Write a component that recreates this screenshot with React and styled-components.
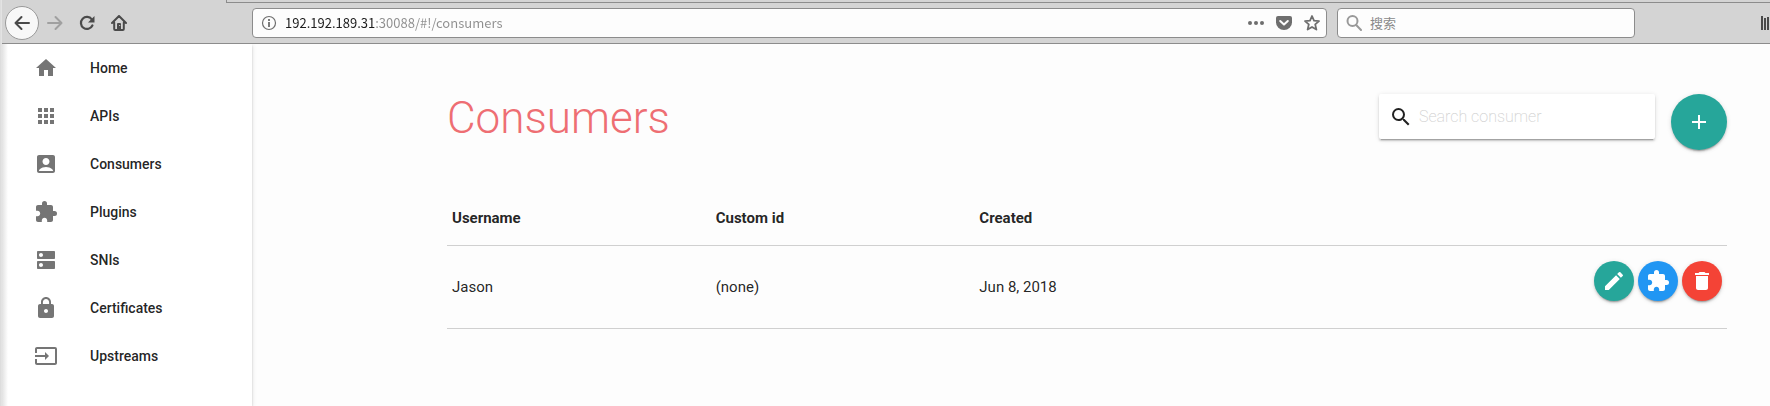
import React from 'react';
import styled, { createGlobalStyle } from 'styled-components';
import {
  MdHome, MdApps, MdAccountBox, MdExtension, MdDns, MdLock, MdInput,
  MdSearch, MdAdd, MdEdit, MdDelete,
} from 'react-icons/md';

const GlobalStyle = createGlobalStyle`
  *, *::before, *::after { box-sizing: border-box; }
  body {
    margin: 0;
    background: #fdfdfd;
    color: rgba(0, 0, 0, 0.87);
    font-family: Roboto, "Noto Sans CJK SC", sans-serif;
    font-size: 15px;
  }
`;

const Window = styled.div`
  display: flex;
  flex-direction: column;
  min-height: 100vh;
  padding-left: 2px;
  background: linear-gradient(to right, #dadada, #e6e6e6 2px, transparent 2px);
`;

const TabStrip = styled.div`
  height: 3px;
  padding-left: 224px;
  background: #d4d4d4;
`;

const TabEdge = styled.div`
  height: 3px;
  border-left: 1px solid #8c8c8c;
  border-bottom: 1px solid #8c8c8c;
`;

const Toolbar = styled.header`
  display: flex;
  align-items: center;
  height: 41px;
  background: #d4d4d4;
  border-bottom: 1px solid #8c8c8c;
`;

const NavButtons = styled.div`
  flex: 0 0 250px;
  display: flex;
  align-items: center;
  padding-left: 3px;
`;

const NavButton = styled.button`
  display: flex;
  align-items: center;
  justify-content: center;
  width: ${(p) => (p.$round ? 34 : 32)}px;
  height: 34px;
  padding: 0;
  border: ${(p) => (p.$round ? '1px solid #999' : '0')};
  border-radius: 50%;
  background: ${(p) => (p.$round ? '#f8f8f8' : 'transparent')};
  color: ${(p) => (p.disabled ? '#a0a0a0' : '#4a4a4a')};
`;

const Field = styled.div`
  flex: ${(p) => p.$grow} 1 0;
  min-width: 0;
  display: flex;
  align-items: center;
  height: 30px;
  padding: 0 6px 0 8px;
  border: 1px solid #8c8c8c;
  border-radius: 4px;
  background: #fdfdfd;
  color: ${(p) => (p.$url ? '#6e6e6e' : '#999')};
  gap: 8px;
  margin-left: ${(p) => (p.$url ? 0 : 10)}px;
`;

const FieldInput = styled.input`
  flex: 1;
  min-width: 0;
  height: 26px;
  padding: 0;
  border: 0;
  outline: 0;
  background: transparent;
  color: #222;
  font: 13px/26px "Noto Sans CJK SC", sans-serif;
  &::placeholder { color: #8a8a8a; opacity: 1; }
`;

/* The host part of the address is dark, the path after it grey. */
const AddressInput = styled(FieldInput)`
  background: linear-gradient(to right, #1c1c1c 90px, #8e8e8e 90px);
  background-clip: text;
  -webkit-background-clip: text;
  color: transparent;
  caret-color: #222;
`;

const FieldButton = styled.button`
  display: flex;
  padding: 0;
  border: 0;
  background: transparent;
  color: inherit;
`;

const FieldActions = styled.div`
  display: flex;
  align-items: center;
  gap: 12px;
`;

const ToolbarSpace = styled.div`
  flex: 126 1 0;
`;

const LibraryButton = styled.button`
  flex: 0 0 9px;
  overflow: hidden;
  display: flex;
  padding: 0;
  border: 0;
  background: transparent;
  color: #4a4a4a;
  svg { flex: none; }
`;

const Body = styled.div`
  flex: 1;
  display: flex;
`;

const Sidebar = styled.nav`
  flex: 0 0 250px;
  background: linear-gradient(to right, #e2e2e2, #fff 6px);
  box-shadow: 0 2px 2px 0 rgba(0, 0, 0, 0.14), 0 1px 5px 0 rgba(0, 0, 0, 0.12);
  clip-path: inset(0 -8px 0 0);
`;

const SideLink = styled.a`
  display: flex;
  align-items: center;
  height: 48px;
  padding-left: 32px;
  gap: 32px;
  color: rgba(0, 0, 0, 0.87);
  font-size: 14px;
  font-weight: 500;
  text-decoration: none;
  svg { width: 24px; height: 24px; fill: #757575; }
`;

const Main = styled.main`
  flex: 1;
  min-width: 0;
  padding: 50px 43px 0 195px;
`;

const PageHead = styled.div`
  display: flex;
  align-items: flex-start;
  height: 97px;
`;

const Title = styled.h1`
  flex: 1;
  margin: 0;
  color: #ee6e73;
  font-size: 44px;
  font-weight: 300;
  line-height: 48px;
`;

const SearchBox = styled.label`
  display: flex;
  align-items: center;
  width: 276px;
  height: 45px;
  margin-right: 16px;
  padding: 0 10px;
  gap: 6px;
  background: #fff;
  border-radius: 2px;
  box-shadow: 0 2px 2px 0 rgba(0, 0, 0, 0.14), 0 1px 5px 0 rgba(0, 0, 0, 0.12), 0 3px 1px -2px rgba(0, 0, 0, 0.2);
  svg { flex: none; width: 24px; height: 24px; }
`;

const SearchInput = styled.input`
  flex: 1;
  min-width: 0;
  padding: 0;
  border: 0;
  outline: 0;
  background: transparent;
  font: 200 16px Roboto, sans-serif;
  &::placeholder { color: #d1d1d1; opacity: 1; }
`;

const tones = { teal: '#26a69a', blue: '#2196f3', red: '#f44336' };

const RoundButton = styled.button`
  display: flex;
  align-items: center;
  justify-content: center;
  width: ${(p) => p.$size}px;
  height: ${(p) => p.$size}px;
  padding: 0;
  border: 0;
  border-radius: 50%;
  background: ${(p) => tones[p.$tone]};
  color: #fff;
  box-shadow: 0 2px 2px 0 rgba(0, 0, 0, 0.14), 0 1px 5px 0 rgba(0, 0, 0, 0.12), 0 3px 1px -2px rgba(0, 0, 0, 0.2);
  svg { width: 24px; height: 24px; }
`;

const Table = styled.table`
  width: 100%;
  border-collapse: separate;
  border-spacing: 0;
  table-layout: fixed;
`;

const HeadCell = styled.th`
  width: ${(p) => p.$width};
  height: 55px;
  padding: 0 5px;
  border-bottom: 1px solid #d0d0d0;
  text-align: left;
  font-weight: 700;
`;

const Cell = styled.td`
  height: 83px;
  padding: 15px 5px;
  border-bottom: 1px solid #d0d0d0;
  vertical-align: ${(p) => (p.$top ? 'top' : 'middle')};
`;

const RowActions = styled.div`
  display: flex;
  justify-content: flex-end;
  gap: 4px;
`;

const stroke = { fill: 'none', stroke: 'currentColor', strokeWidth: 2, strokeLinecap: 'round', strokeLinejoin: 'round' };

const BackIcon = () => (
  <svg width="16" height="16" viewBox="0 0 16 16" {...stroke}><path d="M15 8H1.5M7.5 2l-6 6 6 6" /></svg>
);
const ForwardIcon = () => (
  <svg width="16" height="16" viewBox="0 0 16 16" {...stroke}><path d="M1 8h13.5M8.500 2l6 6-6 6" /></svg>
);
const ReloadIcon = () => (
  <svg width="16" height="16" viewBox="0 0 16 16">
    <path d="M12.8 4.400A6 6 0 1 0 13.400 10.500" {...stroke} strokeWidth="2.200" />
    <path d="M15.500 1v6.500H9z" fill="currentColor" />
  </svg>
);
const HouseIcon = () => (
  <svg width="16" height="16" viewBox="0 0 16 16">
    <path d="M1 8l7-7 7 7M3.200 7.500V14q0 1 1 1h7.600q1 0 1-1V7.500" {...stroke} />
    <path d="M6 9q0-1 1-1h2q1 0 1 1v5H6z" fill="currentColor" />
    <path d="M8.200 10.500h1" stroke="#d4d4d4" strokeWidth="1" />
  </svg>
);
const InfoIcon = () => (
  <svg width="16" height="16" viewBox="0 0 16 16">
    <circle cx="8" cy="8" r="6.500" fill="none" stroke="currentColor" strokeWidth="1.200" />
    <path d="M8 7v5M8 4v2" stroke="currentColor" strokeWidth="1.800" />
  </svg>
);
const DotsIcon = () => (
  <svg width="16" height="16" viewBox="0 0 16 16" fill="currentColor">
    <circle cx="2" cy="8" r="2" /><circle cx="8" cy="8" r="2" /><circle cx="14" cy="8" r="2" />
  </svg>
);
const PocketIcon = () => (
  <svg width="16" height="16" viewBox="0 0 16 16">
    <path d="M2 1h12q2 0 2 2v4.500a8 7.500 0 0 1-16 0V3q0-2 2-2z" fill="currentColor" />
    <path d="M4.200 6L8 9.600 11.800 6" {...stroke} stroke="#fdfdfd" />
  </svg>
);
const StarIcon = () => (
  <svg width="16" height="16" viewBox="0 0 16 16">
    <path d="M8 1l2 4.600 5 .5-3.800 3.300 1.200 5.200L8 12l-4.400 2.600 1.200-5.200L1 6.100l5-.5z" {...stroke} strokeWidth="1.800" />
  </svg>
);
const LensIcon = () => (
  <svg width="16" height="16" viewBox="0 0 16 16" {...stroke}><circle cx="6.500" cy="6" r="5" /><path d="M10.200 10L15 15" /></svg>
);
const LibraryIcon = () => (
  <svg width="16" height="16" viewBox="0 0 16 16" fill="currentColor">
    <path d="M0 1h2v14H0zM3 3h2v12H3zM6 2h2v13H6zM9 3l2-.5 4 12-2 .5z" />
  </svg>
);

const links = [
  ['Home', MdHome], ['APIs', MdApps], ['Consumers', MdAccountBox], ['Plugins', MdExtension],
  ['SNIs', MdDns], ['Certificates', MdLock], ['Upstreams', MdInput],
];

const consumers = [{ username: 'Jason', customId: '(none)', created: 'Jun 8, 2018' }];

export default function App() {
  return (
    <>
      <GlobalStyle />
      <Window>
        <TabStrip><TabEdge /></TabStrip>
        <Toolbar>
          <NavButtons>
            <NavButton $round aria-label="Back"><BackIcon /></NavButton>
            <NavButton disabled aria-label="Forward"><ForwardIcon /></NavButton>
            <NavButton aria-label="Reload"><ReloadIcon /></NavButton>
            <NavButton aria-label="Browser home"><HouseIcon /></NavButton>
          </NavButtons>
          <Field $grow={1059} $url>
            <FieldButton aria-label="Site information"><InfoIcon /></FieldButton>
            <AddressInput aria-label="Address" defaultValue="192.192.189.31:30088/#!/consumers" />
            <FieldActions>
              <FieldButton aria-label="Page actions"><DotsIcon /></FieldButton>
              <FieldButton aria-label="Save to Pocket"><PocketIcon /></FieldButton>
              <FieldButton aria-label="Bookmark"><StarIcon /></FieldButton>
            </FieldActions>
          </Field>
          <Field $grow={282}>
            <LensIcon />
            <FieldInput aria-label="搜索" placeholder="搜索" />
          </Field>
          <ToolbarSpace />
          <LibraryButton aria-label="Library"><LibraryIcon /></LibraryButton>
        </Toolbar>
        <Body>
          <Sidebar>
            {links.map(([label, Icon]) => (
              <SideLink key={label} href={`#!/${label.toLowerCase()}`}><Icon />{label}</SideLink>
            ))}
          </Sidebar>
          <Main>
            <PageHead>
              <Title>Consumers</Title>
              <SearchBox>
                <MdSearch />
                <SearchInput aria-label="Search consumer" placeholder="Search consumer" />
              </SearchBox>
              <RoundButton $size={56} $tone="teal" aria-label="Add consumer"><MdAdd /></RoundButton>
            </PageHead>
            <Table>
              <thead>
                <tr>
                  <HeadCell $width="20.6%">Username</HeadCell>
                  <HeadCell $width="20.6%">Custom id</HeadCell>
                  <HeadCell $width="20.6%">Created</HeadCell>
                  <HeadCell $width="auto" aria-label="Actions" />
                </tr>
              </thead>
              <tbody>
                {consumers.map((c) => (
                  <tr key={c.username}>
                    <Cell>{c.username}</Cell>
                    <Cell>{c.customId}</Cell>
                    <Cell>{c.created}</Cell>
                    <Cell $top>
                      <RowActions>
                        <RoundButton $size={40} $tone="teal" aria-label="Edit"><MdEdit /></RoundButton>
                        <RoundButton $size={40} $tone="blue" aria-label="Plugins"><MdExtension /></RoundButton>
                        <RoundButton $size={40} $tone="red" aria-label="Delete"><MdDelete /></RoundButton>
                      </RowActions>
                    </Cell>
                  </tr>
                ))}
              </tbody>
            </Table>
          </Main>
        </Body>
      </Window>
    </>
  );
}
